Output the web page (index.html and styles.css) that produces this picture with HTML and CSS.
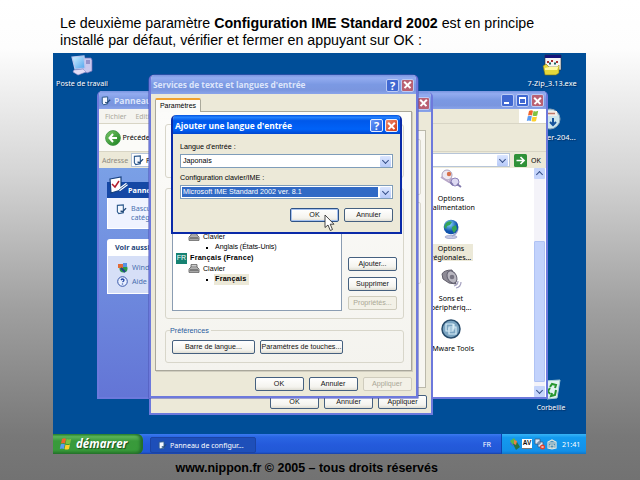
FILE: index.html
```
<!DOCTYPE html>
<html lang="fr">
<head>
<meta charset="utf-8">
<title>Configuration IME</title>
<link rel="stylesheet" href="styles.css">
</head>
<body>
<svg class="defs" aria-hidden="true">
  <defs>
    <linearGradient id="green" x1="0" y1="0" x2="1" y2="1"><stop offset="0" stop-color="#7cc86a"/><stop offset="1" stop-color="#17801c"/></linearGradient>
    <linearGradient id="screen" x1="0" y1="0" x2="1" y2="1"><stop offset="0" stop-color="#d5f2ff"/><stop offset="1" stop-color="#4da3ee"/></linearGradient>
    <radialGradient id="globe" cx=".4" cy=".3"><stop offset="0" stop-color="#8fe0ff"/><stop offset="1" stop-color="#1053ad"/></radialGradient>
    <symbol id="flag" viewBox="0 0 14 14">
      <path d="M3 2q2-1.500 4-.3L6 6.400Q4 5.500 2 6.500z" fill="#f0642c"/>
      <path d="M7.600 2q2 1 4.600-.2l-1 4.600q-2.400 1-4.600 0z" fill="#7fc241"/>
      <path d="M1.800 7.300q2-1 4-.1L4.800 12Q3 11 .800 12z" fill="#5b9cf2"/>
      <path d="M6.500 7.400q2.200 1 4.500 0l-1 4.600q-2.300 1-4.500 0z" fill="#fcd02e"/>
    </symbol>
    <symbol id="panel" viewBox="0 0 12 12">
      <path d="M1.500 1.500 8 1v8.500l-5 1-1.500-2z" fill="#f4f8ff" stroke="#2d5a8d" stroke-width="1.200"/>
      <path d="M5 7.500 7 8.500l4-4" fill="none" stroke="#244a78" stroke-width="1.500"/>
    </symbol>
    <symbol id="keyboard" viewBox="0 0 12 9">
      <path d="M3 3V.600h6V3M1 5l2-2h6l2 2v3.400H1z" fill="#d8d8d8" stroke="#555" stroke-width=".8"/>
      <path d="M2 5.200h8M1.600 6.800h9" stroke="#444" stroke-width=".9"/>
    </symbol>
  </defs>
</svg>

<p class="intro">Le deuxième paramètre <b>Configuration IME Standard 2002</b> est en principe<br>installé par défaut, vérifier et fermer en appuyant sur OK :</p>

<main class="desktop">
  <div class="shortcut computer">
    <svg width="22" height="21" viewBox="0 0 22 21"><path d="M13 3h7l1 2v11l-5 2-4-3z" fill="#c9c8ee" stroke="#7672b8" stroke-width=".7"/><path d="M15 6h4M15 8h4" stroke="#625fa8"/><path d="m1 2 12-1 1 12-10 1z" fill="url(#screen)" stroke="#b9c6ef" stroke-width="1.200"/><path d="m3 15 9-1 3 3-8 3-5-3z" fill="#e4ddf5" stroke="#9a92cb" stroke-width=".6"/></svg>
    <span>Poste de travail</span>
  </div>
  <div class="shortcut zip">
    <svg width="20" height="22" viewBox="0 0 20 22"><path d="M3 1h16v15H3z" fill="#f5f5f5" stroke="#333" stroke-width=".6"/><path d="M3 1h16v3H3z" fill="#15157b"/><path d="M5 8h2M9 7h2M14 8h2" stroke="#a33" stroke-width="2"/><path d="M7 9.500h2M12 9.500h2" stroke="#165f5f" stroke-width="2"/><path d="m1 12 3-2 3 3h8l2-2v8l-3 2H3z" fill="#e6d83b" stroke="#777015" stroke-width=".6"/><path d="m3 14 4-1h8l2-2-2 5H3z" fill="#fffaa0"/></svg>
    <span>7-Zip_3.13.exe</span>
  </div>
  <div class="shortcut disc">
    <svg width="22" height="22" viewBox="0 0 22 22"><circle cx="11" cy="11" r="10" fill="#cde7ed" stroke="#8fa6b8"/><path d="M5 3h13v5H5z" fill="#f3eee8"/><path d="M8 5.500h8" stroke="#bd796a" stroke-width="1.500"/><path d="M14 10v7m-3-3 3 3 3-3" fill="none" stroke="#17539b" stroke-width="2"/></svg>
    <span>er-204...</span>
  </div>
  <div class="shortcut bin">
    <svg width="20" height="22" viewBox="0 0 20 22"><path d="m2 3 16-1-3 18-10 1z" fill="#e1f2f1" stroke="#a9cfd5"/><path d="m8 9 2-3 4 1-1 3M14 12l-1 5-4 1 1-3M8 10l-2 3 2 3" fill="none" stroke="#25962e" stroke-width="2"/></svg>
    <span>Corbeille</span>
  </div>

  <section class="window explorer">
    <header class="titlebar"><svg width="10" height="10"><use href="#panel"/></svg><h2>Panneau</h2>
      <div class="controls"><i class="ctl min"></i><i class="ctl max"></i><i class="ctl close"></i></div></header>
    <div class="menubar"><span>Fichier</span><span>Edition</span><div class="brand"><svg width="14" height="14"><use href="#flag"/></svg></div></div>
    <div class="toolbar"><svg width="16" height="16" viewBox="0 0 16 16"><circle cx="8" cy="8" r="7.400" fill="url(#green)" stroke="#3b9142" stroke-width=".8"/><path d="M8 4 4.500 8 8 12M5 8h7" fill="none" stroke="#fff" stroke-width="2"/></svg><span>Précédente</span></div>
    <div class="address"><span class="addr-label">Adresse</span><div class="addr-field"><svg width="11" height="11"><use href="#panel"/></svg><span>Panneau</span><i class="drop"></i></div>
      <svg class="go" width="13" height="13" viewBox="0 0 13 13"><rect width="13" height="13" rx="1.500" fill="#2f9138"/><path d="M2.500 6.500h7M6.500 3l3.500 3.500L6.500 10" fill="none" stroke="#fff" stroke-width="1.700"/></svg><span>OK</span></div>
    <div class="explorer-body">
      <aside>
        <div class="task-head dark"><svg width="20" height="19" viewBox="0 0 20 19"><path d="m2 3 11-2v13L3 17z" fill="#fff" stroke="#17417f" stroke-width="1.200"/><path d="m4 8 3 3 4-6" fill="none" stroke="#b31e2d" stroke-width="1.500"/><path d="m11 14 8-6" stroke="#fff" stroke-width="3"/><path d="m11 14 8-6" stroke="#315f9c" stroke-width="1"/></svg><b>Panneau</b></div>
        <div class="task-body first"><svg width="11" height="11"><use href="#panel"/></svg><span>Basculer<br>catégories</span></div>
        <div class="task-head light"><b>Voir aussi</b></div>
        <div class="task-body second">
          <div><svg width="11" height="11" viewBox="0 0 11 11"><circle cx="6.500" cy="6.500" r="4" fill="#2b9b48"/><path d="M1 2h5v4H1z" fill="#e26b36"/><path d="M6 1h4v4H6z" fill="#5793e4"/><path d="m4 6 4 4" stroke="#24408e" stroke-width="2"/></svg><span>Windows</span></div>
          <div><svg width="11" height="11" viewBox="0 0 11 11"><circle cx="5.500" cy="5.500" r="4.800" fill="#e8efff" stroke="#3656a8"/><path d="M4 4q1.500-2 3 0 0 1-1.500 2M5.500 7.500v1" fill="none" stroke="#2245a2" stroke-width="1.300"/></svg><span>Aide et</span></div>
        </div>
      </aside>
      <div class="items">
        <figure><svg width="22" height="20" viewBox="0 0 22 20"><circle cx="7" cy="6" r="5" fill="#eee9f2" stroke="#aaa0bc"/><circle cx="9" cy="5" r="2.200" fill="#d8704a"/><path d="m1 8 8 5 3-4" fill="none" stroke="#b9a8c9" stroke-width="2"/><circle cx="15" cy="13" r="4" fill="#dedaf3" stroke="#8d82b9"/><path d="m17 15 4 3M13 16l-3-3" stroke="#827aad" stroke-width="2"/></svg><figcaption>Options<br>d'alimentation</figcaption></figure>
        <figure class="selected"><svg width="20" height="20" viewBox="0 0 20 20"><ellipse cx="10" cy="18" rx="6" ry="1.700" fill="#c4c8e5" stroke="#8e95bd" stroke-width=".6"/><path d="M15 3q5 10-4 14" fill="none" stroke="#9ba5cd" stroke-width="1.500"/><circle cx="10" cy="8" r="7.300" fill="url(#globe)"/><path d="M5 4q3-3 6-1l-2 3-3 1-1 3-2-2zM11 8l4-2 1 4-3 4-2-3z" fill="#35a457"/></svg><figcaption>Options<br>régionales...</figcaption></figure>
        <figure><svg width="22" height="20" viewBox="0 0 22 20"><path d="M2 5q2-4 10-4l4 14-7-1-6-4z" fill="#8e8b96" stroke="#5f5c69"/><ellipse cx="12" cy="8" rx="4.500" ry="6.500" transform="rotate(-28 12 8)" fill="#b9b7c0" stroke="#626070"/><circle cx="12" cy="8" r="2.300" fill="#777482"/><path d="M14 17q4-1 4-5M16 19q5-1 5-6" fill="none" stroke="#a4a0bf" stroke-width="1.200"/></svg><figcaption>Sons et<br>périphériq...</figcaption></figure>
        <figure><svg width="20" height="20" viewBox="0 0 20 20"><circle cx="10" cy="10" r="9" fill="#7ba5c2" stroke="#274c6c" stroke-width="1.500"/><path d="M5 5h7v7H5zM8 8h7v7H8zM7 10h6v-5" fill="none" stroke="#d7edf7" stroke-width="1.200"/></svg><figcaption>VMware Tools</figcaption></figure>
      </div>
      <div class="scrollbar"><i class="arrow up"></i><i class="track"></i><i class="thumb"></i><i class="arrow down"></i></div>
    </div>
  </section>

  <section class="window regional">
    <header class="titlebar"><h2></h2><div class="controls"><i class="ctl close"></i></div></header>
    <div class="regional-page"><div class="ghost one"></div><div class="ghost two"></div></div>
    <footer><button>OK</button><button>Annuler</button><button>Appliquer</button></footer>
  </section>

  <section class="window services">
    <header class="titlebar"><h2>Services de texte et langues d'entrée</h2><div class="controls"><i class="ctl help">?</i><i class="ctl close"></i></div></header>
    <div class="tab">Paramètres</div>
    <div class="tab-page">
      <div class="group default-language"></div>
      <div class="group installed">
        <div class="language-list">
          <div class="kbd"><svg width="12" height="9"><use href="#keyboard"/></svg>Clavier</div>
          <div class="leaf"><span>Anglais (États-Unis)</span></div>
          <div class="lang"><i>FR</i><b>Français (France)</b></div>
          <div class="kbd"><svg width="12" height="9"><use href="#keyboard"/></svg>Clavier</div>
          <div class="leaf"><b class="chosen">Français</b></div>
        </div>
        <div class="side-buttons"><button>Ajouter...</button><button>Supprimer</button><button disabled>Propriétés...</button></div>
      </div>
      <fieldset class="group prefs"><legend>Préférences</legend><button>Barre de langue...</button><button>Paramètres de touches...</button></fieldset>
    </div>
    <footer><button>OK</button><button>Annuler</button><button disabled>Appliquer</button></footer>
  </section>

  <section class="window dialog">
    <header class="titlebar"><h2>Ajouter une langue d'entrée</h2><div class="controls"><i class="ctl help">?</i><i class="ctl close"></i></div></header>
    <div class="form">
      <label>Langue d'entrée :</label>
      <div class="combo"><span>Japonais</span><i class="drop"></i></div>
      <label>Configuration clavier/IME :</label>
      <div class="combo active"><span>Microsoft IME Standard 2002 ver. 8.1</span><i class="drop"></i></div>
      <footer><button class="default">OK</button><button>Annuler</button></footer>
    </div>
  </section>

  <svg class="cursor" width="12" height="18" viewBox="0 0 12 18"><path d="M1 1v12.500l3-2.500 2.300 5.500 2.200-1L6.200 10.200H10z" fill="#fff" stroke="#333" stroke-width=".9"/></svg>

  <nav class="taskbar">
    <div class="start"><svg width="14" height="14"><use href="#flag"/></svg><span>démarrer</span></div>
    <div class="task"><svg width="9" height="9"><use href="#panel"/></svg><span>Panneau de configur...</span></div>
    <span class="locale">FR</span>
    <div class="tray">
      <svg width="11" height="12" viewBox="0 0 11 12"><path d="m1 3 4-3 3 4-4 3z" fill="#5eb64a"/><path d="m4 6 4-2 3 5-4 3z" fill="#287346"/><path d="m1 4 3 3 1 2-4-3z" fill="#4668d1"/><path d="m5 2 3 1-1 4-2-1z" fill="#e98244"/></svg>
      <i class="av">AV</i>
      <svg width="11" height="12" viewBox="0 0 11 12"><path d="M1 1h5v5H1zM4 4h5v5H4z" fill="#dce7f4" stroke="#405d84" stroke-width=".8"/><circle cx="8.500" cy="9" r="2.500" fill="#e4412c"/><path d="m7.500 8 2 2m0-2-2 2" stroke="#fff" stroke-width=".7"/></svg>
      <svg width="10" height="11" viewBox="0 0 10 11"><path d="m1 3 4-2 4 2v6l-4 1-4-1z" fill="#4f8fb6" stroke="#e5e7df" stroke-width="1.200"/><path d="M2 4h6M3 6h4v3H3z" fill="none" stroke="#e8e5d9"/></svg>
      <span>21:41</span>
    </div>
  </nav>
</main>
<p class="copyright">www.nippon.fr © 2005 – tous droits réservés</p>
</body>
</html>
```
FILE: styles.css
```
* { box-sizing: border-box; }
body {
  margin: 0; width: 640px; height: 480px; overflow: hidden;
  background: linear-gradient(#fff 0%, #fdfdfd 10%, #d5d5d5 36%, #a0a0a0 64%, #787878 91%, #727272 100%);
  font-family: "Liberation Sans", Arial, sans-serif; color: #000;
}
svg { display: block; flex: none; }
i { font-style: normal; }
h2, p, figure { margin: 0; }
.defs { position: absolute; width: 0; height: 0; }
.intro { height: 53px; padding: 14.500px 0 0 60px; font-size: 14.220px; line-height: 17px; white-space: nowrap; }
.copyright { padding: 6px 0 0 175.500px; font-size: 12.450px; font-weight: bold; line-height: 17px; white-space: nowrap; }

.desktop { position: relative; margin-left: 53px; width: 533px; height: 401px; overflow: hidden; background: #004e98; font-size: 7.200px; line-height: 9px; }

.shortcut { position: absolute; display: flex; flex-direction: column; align-items: center; color: #fff; font: 7.200px/9px "Noto Sans", sans-serif; white-space: nowrap; }
.shortcut span { text-shadow: 1px 1px 1px #002c60; }
.computer { left: 1px; top: 2px; width: 56px; }
.computer span { margin-top: 3px; }
.zip { left: 472px; top: 1px; width: 54px; }
.zip span { margin-top: 3px; font-size: 7.400px; }
.disc { left: 486px; top: 55px; width: 50px; align-items: flex-start; }
.disc span { margin: 3px 0 0 8px; font-size: 7.500px; }
.bin { left: 482px; top: 325px; width: 32px; }
.bin svg { margin-left: 2px; }
.bin span { margin-top: 3px; font-size: 6.900px; }

.window { position: absolute; display: flex; flex-direction: column; border: 2px solid #6d79dc; border-top: 0; border-radius: 5px 5px 0 0; background: #ece9d8; overflow: hidden; }
.titlebar { flex: none; display: flex; align-items: center; height: 18px; margin: 0 -2px; padding: 1px 3px 0 4px; background: linear-gradient(#7a94e0, #93acf0 15%, #7b99e3 50%, #7a96df 80%, #8aa4ea); color: #dde5fb; }
.titlebar h2 { flex: 1; font: bold 8.500px/12px "Open Sans", sans-serif; white-space: nowrap; }
.controls { display: flex; gap: 2px; }
.ctl { position: relative; width: 13px; height: 13px; border: 1px solid #bccbf4; border-radius: 2px; background: #4068d2; color: #fff; font: bold 11px/11px "Open Sans", sans-serif; text-align: center; }
.close { background: #b96072; }
.close::before, .close::after { content: ""; position: absolute; left: 1px; top: 4.750px; width: 9px; height: 1.500px; background: #fff; transform: rotate(45deg); }
.close::after { transform: rotate(-45deg); }
.min::after { content: ""; position: absolute; left: 2px; bottom: 2px; width: 5px; height: 2px; background: #fff; }
.max::after { content: ""; position: absolute; inset: 2px; border: 1px solid #fff; border-top-width: 2px; }

button { display: block; width: 49px; height: 14px; padding: 0; border: 1px solid #45607f; border-radius: 2px; background: linear-gradient(#fff, #f4f3ee 75%, #dfddd3); font: 7.150px/12px "Liberation Sans", sans-serif; color: #111; white-space: nowrap; flex: none; }
button:disabled { border-color: #cfccbd; background: #f3f1e7; color: #aaa796; }
button.default { border-color: #2e5286; box-shadow: inset 0 0 0 1px #a5c1ef; }
.drop { position: relative; flex: none; width: 11px; height: 11px; border-radius: 1px; background: linear-gradient(#dbe6ff, #b7caf8); }
.drop::after, .arrow::after { content: ""; position: absolute; left: 3px; top: 2px; width: 4px; height: 4px; border: solid #354f88; border-width: 0 1.500px 1.500px 0; transform: rotate(45deg); }

.explorer { left: 44px; top: 38px; width: 451px; height: 308px; font-family: "Noto Sans", sans-serif; }
.explorer .titlebar { height: 18px; gap: 3px; padding-right: 4px; }
.menubar { display: flex; height: 15px; flex: none; padding-left: 6px; gap: 9px; line-height: 15px; font-size: 6.900px; color: #aaa99d; border-bottom: 1px solid #d8d5c5; background: linear-gradient(90deg, #f5f4ef 50px, #ece9d8 51px); }
.brand { margin-left: auto; width: 27px; background: #fff; display: grid; place-items: center; }
.toolbar { display: flex; align-items: center; gap: 2px; height: 28px; flex: none; padding-left: 5.500px; border-bottom: 1px solid #d8d5c5; background: linear-gradient(90deg, #fbfbf8 50px, #ece9d8 51px); }
.address { display: flex; align-items: center; gap: 4px; height: 16px; flex: none; padding-left: 3px; font-size: 7px; }
.addr-label { width: 26px; color: #8c8a80; margin-right: -1px; }
.addr-field { display: flex; align-items: center; gap: 2px; width: 379px; height: 14px; padding: 0 1px; border: 1px solid #b7c5d8; background: #fff; }
.addr-field .drop { margin-left: auto; }
.explorer-body { display: flex; flex: 1; min-height: 0; background: #fff; border-bottom: 0; }
aside { width: 60px; flex: none; padding: 14px 0 0 8px; background: linear-gradient(#7aa0e6, #6375d6); }
.task-head { height: 16px; display: flex; align-items: center; font-size: 7.300px; white-space: nowrap; overflow: visible; }
.task-head.dark { background: #1548a5; color: #fff; padding-left: 1px; }
.task-head.dark svg { margin-top: -10px; }
.task-head.light { margin-top: 10px; height: 17px; background: #fff; color: #234579; padding-left: 8px; border-radius: 3px 0 0; font-size: 7.200px; }
.task-body { background: #dce4f9; color: #496faf; border: solid #fff; border-width: 0 0 1px 1px; }
.first { display: flex; gap: 4px; height: 31px; padding: 5.500px 0 0 8px; background: #eff3ff; }
.second { height: 38px; padding: 4px 0 0 9px; background: #d6dff7; }
.second div { display: flex; gap: 4px; height: 14px; align-items: center; }
.items { flex: 1; padding: 1px 0 0 259px; font-size: 7.100px; line-height: 8.700px; text-align: center; }
.items figure { width: 66px; height: 50px; display: flex; flex-direction: column; align-items: center; white-space: nowrap; }
.items svg { height: 20px; margin-bottom: 5px; }
.selected figcaption { background: #ece9d8; width: 44px; display: flex; justify-content: center; }
.scrollbar { width: 11px; flex: none; display: flex; flex-direction: column; background: #f4f3f9; margin-right: 1px; }
.arrow { position: relative; height: 11px; background: #c6d5fb; border-radius: 1px; flex: none; }
.up::after { transform: rotate(-135deg); top: 4px; }
.track { height: 62px; flex: none; }
.thumb { flex: 1; margin-bottom: 4px; background: #c2d2fc; border: 1px solid #b0c3f4; border-radius: 1px; }

.regional { left: 96px; top: 39px; width: 284px; height: 323px; }
.regional .titlebar { height: 20px; padding: 2px 3px 0; }
.regional-page { margin: 18px 5px 0; height: 258px; background: #f7f6f1; border: 1px solid #bbb9ab; padding: 8px 4px 0; }
.ghost { border: 1px solid #d9d7cb; border-radius: 2px; height: 56px; }
.ghost.two { height: 82px; margin-top: 7px; }
.regional footer { display: flex; justify-content: flex-end; gap: 5px; padding: 7px 4px 0; }

.services { left: 96px; top: 22px; width: 269px; height: 323px; box-shadow: 0 0 0 .500px #4d52b4; }
.services .titlebar { height: 19px; padding-right: 4px; }
.services > .titlebar h2 { font-size: 8.400px; letter-spacing: -.03px; }
.tab { width: 46px; height: 14px; margin: 4px 0 -1px 4px; border: 1px solid #aaa99b; border-top: 2px solid #f0a12f; border-bottom: 0; border-radius: 2px 2px 0 0; background: #fbfbf9; text-align: center; line-height: 12px; font-size: 7px; position: relative; flex: none; }
.tab-page { flex: none; margin: 0 4.500px 0 4px; height: 260px; border: 1px solid #a9a79b; box-shadow: 1px 1px #d0cdbf; background: linear-gradient(#fcfcfa, #f4f3ee); padding: 12px 7px 0 9px; }
.group { margin: 0; border: 1px solid #d8d6ca; border-radius: 3px; }
.default-language { height: 54px; }
.installed { display: flex; height: 131px; margin-top: 10px; padding: 0 5px 0 6px; }
.language-list { width: 170px; height: 122px; border: 1px solid #8b9db2; background: #fff; padding-top: 41.500px; line-height: 10.700px; font-size: 7.100px; }
.kbd { display: flex; align-items: center; gap: 3px; padding-left: 15px; height: 10.700px; }
.leaf { height: 10.700px; padding-left: 42px; position: relative; }
.leaf::before { content: ""; position: absolute; left: 33px; top: 5px; width: 2px; height: 2px; background: #000; }
.leaf span { letter-spacing: -.05px; }
.lang { display: flex; align-items: center; gap: 3px; height: 10.700px; padding-left: 3px; }
.lang i { width: 11px; height: 11px; background: #168272; color: #fff; font-size: 7px; text-align: center; }
.lang b, .leaf b { font-size: 7.300px; letter-spacing: .17px; }
.chosen { display: inline-block; background: #ece9d8; padding-right: 3px; margin-left: -1px; padding-left: 1px; }
.side-buttons { margin: 68px 0 0 6px; display: flex; flex-direction: column; gap: 5.500px; }
.prefs { margin-top: 7px; height: 37px; display: flex; gap: 5px; padding: 4.500px 0 0 6px; }
.prefs legend { color: #285a9c; padding: 0 2px 0 0; margin-left: -2px; height: 9px; line-height: 9px; }
.prefs button { width: 83px; }
.services footer { display: flex; justify-content: flex-end; gap: 5px; padding: 6px 4.500px 0; }

.dialog { left: 118px; top: 62px; width: 231px; height: 119px; border-color: #0a2aa8; }
.dialog .titlebar { height: 19px; padding: 2px 4px 0; background: linear-gradient(#0453df, #2583ff 12%, #0058ea 30%, #0062f8 75%, #0046cf); color: #fff; }
.dialog .titlebar h2 { font-size: 8.400px; letter-spacing: -.02px; }
.dialog .ctl { border-color: #e5edff; background: linear-gradient(135deg, #6695fa, #245edb); }
.dialog .close { background: linear-gradient(135deg, #f18a6a, #cf3d18); }
.form { padding: 8px 7px 0; display: flex; flex-direction: column; }
.form label { height: 10px; line-height: 10px; }
.combo { display: flex; align-items: center; height: 14px; margin: 2px 0 5px; padding: 1px; border: 1px solid #7f9db9; background: #fff; }
.combo span { flex: 1; margin-right: 2px; padding-left: 1px; line-height: 10px; }
.active { margin-bottom: 9px; }
.active span { background: #316ac5; color: #fff; }
.dialog footer { display: flex; justify-content: flex-end; gap: 5px; }

.cursor { position: absolute; left: 271px; top: 161px; }

.taskbar { position: absolute; left: 0; bottom: 0; width: 533px; height: 20px; display: flex; align-items: center; color: #fff; background: linear-gradient(#3b7af0, #2a66e3 15%, #245adb 55%, #2159d6 90%, #1941a5); font-family: "Noto Sans", sans-serif; }
.start { display: flex; align-items: center; gap: 3px; width: 90px; height: 20px; padding-left: 6px; border-radius: 0 6px 6px 0; background: linear-gradient(#2f8f31, #5bb458 13%, #399a3b 35%, #389a3a 80%, #27772a); box-shadow: inset -3px 0 3px #236d2b; }
.start span { font: italic bold 11.500px/18px "Open Sans", sans-serif; text-shadow: 1px 1px 1px #194d1b; }
.task { display: flex; align-items: center; gap: 3px; width: 106px; height: 16px; margin: 2px 0 0 7px; padding-left: 7px; background: #1e4fb9; border: 1px solid #1b44a4; border-radius: 2px; font-size: 7.050px; }
.locale { margin-left: auto; margin-right: 10px; }
.tray { width: 85px; height: 20px; display: flex; align-items: center; gap: 2px; padding-left: 7px; border-left: 1px solid #1042af; background: linear-gradient(#38b4f6, #139aef 18%, #1290e8 85%, #1276c8); font-size: 7.200px; }
.tray span { margin-left: 3px; }
.av { width: 10px; height: 10px; background: #fff; color: #111; border-bottom: 1px solid #777; font: bold 6.500px/8px "Liberation Sans", sans-serif; text-align: center; }
```
